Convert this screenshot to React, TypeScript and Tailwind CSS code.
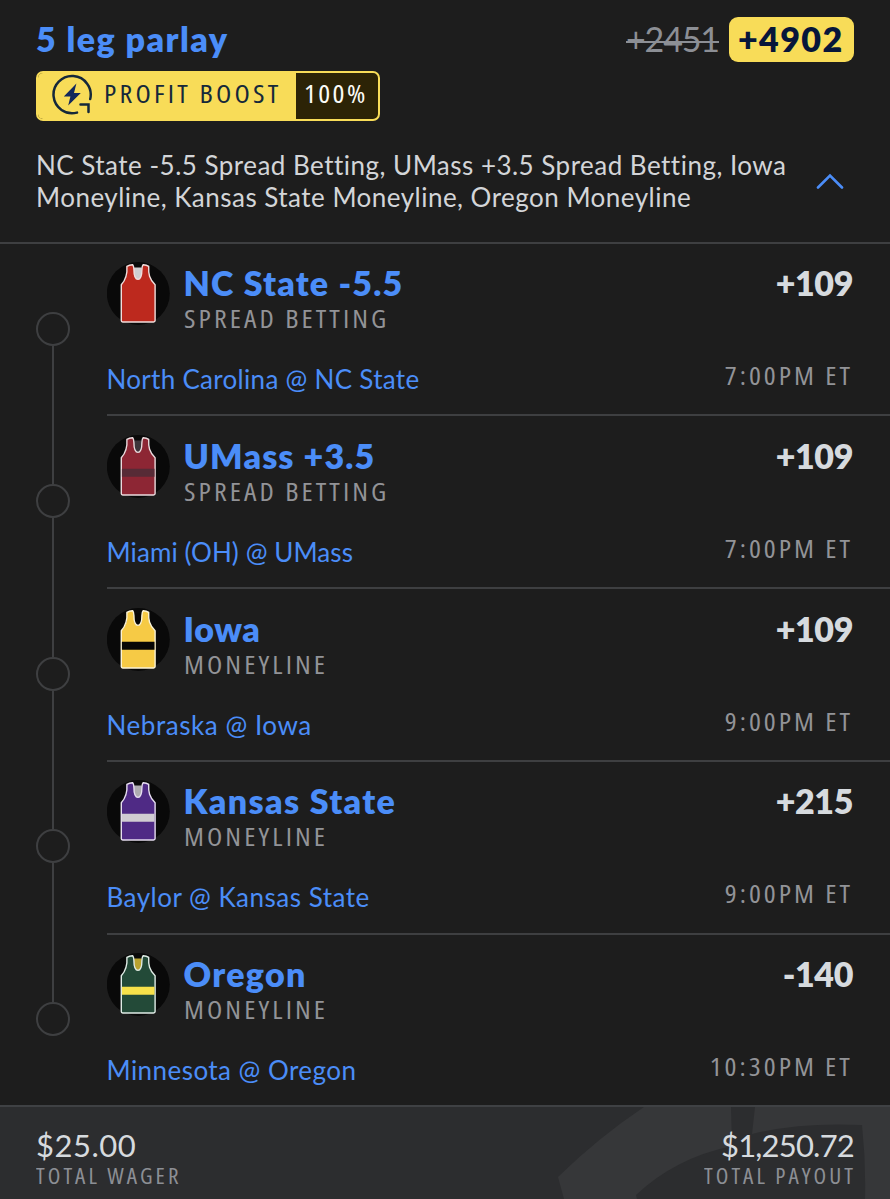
import type { ReactNode } from "react";

type Leg = {
  pick: string;
  pickClass: string;
  market: string;
  game: string;
  gameClass: string;
  odds: string;
  time: string;
  jersey: { body: string; stripe?: string; neck: string; trim: string };
};

const LEGS: Leg[] = [
  {
    pick: "NC State -5.5",
    pickClass: "tracking-[1.2px]",
    market: "SPREAD BETTING",
    game: "North Carolina @ NC State",
    gameClass: "tracking-[0.3px]",
    odds: "+109",
    time: "7:00PM ET",
    jersey: { body: "#bd291e", neck: "#cfcfd1", trim: "#f1dedd" },
  },
  {
    pick: "UMass +3.5",
    pickClass: "tracking-[1.1px]",
    market: "SPREAD BETTING",
    game: "Miami (OH) @ UMass",
    gameClass: "tracking-[0.1px]",
    odds: "+109",
    time: "7:00PM ET",
    jersey: { body: "#8d2634", stripe: "#572b36", neck: "#3c353a", trim: "#eadadd" },
  },
  {
    pick: "Iowa",
    pickClass: "tracking-[0.6px]",
    market: "MONEYLINE",
    game: "Nebraska @ Iowa",
    gameClass: "tracking-[0.55px]",
    odds: "+109",
    time: "9:00PM ET",
    jersey: { body: "#f6ca45", stripe: "#060606", neck: "#060606", trim: "#fbf3d6" },
  },
  {
    pick: "Kansas State",
    pickClass: "tracking-[1.35px]",
    market: "MONEYLINE",
    game: "Baylor @ Kansas State",
    gameClass: "tracking-[0.5px]",
    odds: "+215",
    time: "9:00PM ET",
    jersey: { body: "#4f2a85", stripe: "#d0ccd2", neck: "#aeacb0", trim: "#e6ddf0" },
  },
  {
    pick: "Oregon",
    pickClass: "tracking-[1.3px]",
    market: "MONEYLINE",
    game: "Minnesota @ Oregon",
    gameClass: "tracking-[0.45px]",
    odds: "-140",
    time: "10:30PM ET",
    jersey: { body: "#234a38", stripe: "#f7e14a", neck: "#b9a32f", trim: "#e0ece6" },
  },
];

// Narrow, widely tracked caps used for labels and times
function Caps({ className, children }: { className: string; children: ReactNode }) {
  return (
    <span
      className={`block scale-x-[1.078] whitespace-nowrap font-['Open_Sans',sans-serif] [font-stretch:75%] ${className}`}
    >
      {children}
    </span>
  );
}

function Jersey({ body, stripe, neck, trim }: Leg["jersey"]) {
  return (
    <svg className="block size-[63px] shrink-0" viewBox="0 0 63 63">
      <circle cx="31.3" cy="31.5" r="31.5" fill="#090909" />
      <g transform="translate(-.7 0)">
        <path d="M27.5 5.5h8v8l-2 4.5h-4l-2-4.5z" fill={neck} />
        <path
          d="M20.6 4.4Q23.2 2.6 26.4 2.7Q27.6 4 27.6 7.5C27.6 14 28.8 17.4 31.7 17.4S35.6 14 35.6 7.5Q35.6 4 36.8 2.7Q40 2.6 42.4 4.4C42 12 43 17 48.8 22.8V58.6Q48.8 59.9 47.2 60H16.4Q15 59.9 15 58.6V22.8C20.2 17 21.2 12 20.6 4.4Z"
          fill={body}
          stroke={trim}
          strokeWidth="1.4"
          strokeLinejoin="round"
        />
        {stripe ? <path d="M15.6 33.8h32.6v8H15.6z" fill={stripe} /> : null}
      </g>
    </svg>
  );
}

function BoostIcon() {
  return (
    <svg className="mt-px block h-[42px] w-[42px]" viewBox="0 0 42 42" fill="none">
      <path
        d="M39.2 25A18.6 18.6 0 1 0 26 38.6M29.5 30.5h8v7.6"
        stroke="#15283a"
        strokeWidth="2.5"
        strokeLinecap="round"
      />
      <path d="M25.4 9.6L12.8 22.4h6.6l-2.2 9.2 12.6-12.6H23z" fill="#13285c" />
    </svg>
  );
}

function LegRow({ leg, index }: { leg: Leg; index: number }) {
  const first = index === 0;
  const last = index === LEGS.length - 1;
  return (
    <div className="flex h-[172.8px] pl-9">
      <div className="flex w-[70.5px] shrink-0 flex-col">
        <div className={`ml-4 w-0.5 ${first ? "h-[68.5px]" : "h-[67.5px] bg-[#3e3f41]"}`} />
        <div className="size-[34px] shrink-0 rounded-full border-2 border-[#3e3f41]" />
        <div className={`ml-4 w-0.5 flex-1 ${last ? "" : "bg-[#3e3f41]"}`} />
      </div>
      <div className={`flex flex-1 flex-col pr-[37px] ${last ? "" : "border-b-2 border-[#3e3f41]"}`}>
        <div className="flex items-start pt-[18.5px]">
          <Jersey {...leg.jersey} />
          <div className="ml-3.5 flex-1 pt-0.5">
            <h2 className={`whitespace-nowrap text-[34px] leading-[38px] font-extrabold text-[#4b8df8] ${leg.pickClass}`}>
              {leg.pick}
            </h2>
            <Caps className="-mt-px origin-left text-[26px] leading-[34px] tracking-[2.85px] text-[#929397]">
              {leg.market}
            </Caps>
          </div>
          <span className="pt-0.5 text-[34px] leading-[38px] font-extrabold tracking-[-0.4px] text-[#d6dade]">
            {leg.odds}
          </span>
        </div>
        <div className="mt-[23px] flex items-start justify-between">
          <span className={`whitespace-nowrap pt-[5px] text-[26px] leading-8 text-[#4b8df8] ${leg.gameClass}`}>
            {leg.game}
          </span>
          <Caps className="origin-right text-[26px] leading-[34px] tracking-[2.8px] text-[#929397]">{leg.time}</Caps>
        </div>
      </div>
    </div>
  );
}

function Watermark() {
  return (
    <svg className="absolute inset-y-0 right-0 h-[92px] w-[340px]" viewBox="0 0 340 92" fill="#363739">
      <path d="M94 0Q49 30 8 70L14 92H87L86 88Q125 51 182 39L181 0Z" />
      <path d="M205 0L202 27Q250 15 312 18Q316 55 315 92H340V0Z" />
    </svg>
  );
}

export default function App() {
  return (
    <div className="h-[1199px] w-[890px] overflow-hidden bg-[#1d1d1d] font-['Lato',sans-serif]">
      <header className="h-[243.5px] border-b-2 border-[#3e3f41] pr-9 pl-9">
        <div className="flex items-start justify-between pt-[17px]">
          <h1 className="pt-0.5 text-[34px] leading-10 font-extrabold tracking-[1.45px] text-[#4b8df8]">
            5 leg parlay
          </h1>
          <div className="flex gap-[10px]">
            <span className="relative pt-0.5 text-[34px] leading-10 tracking-[-1.1px] text-[#8c8f95]">
              +2451
              <span className="absolute top-[24px] left-0 h-0.5 w-full bg-[#8c8f95]" />
            </span>
            <span className="h-[45px] w-[125px] rounded-[9px] bg-[#f8dc58] pt-0.5 pl-[9px] text-[34px] leading-10 font-extrabold tracking-[1.4px] text-[#07163a]">
              +4902
            </span>
          </div>
        </div>
        <div className="mt-[9px] flex h-[50px] w-[344px] overflow-hidden rounded-[7px] border-2 border-[#f8dc58] bg-[#2c2306]">
          <div className="flex w-[258px] bg-[#f8dc58] pl-[13px]">
            <BoostIcon />
            <Caps className="ml-[11px] origin-left text-[26px] leading-10 tracking-[3px] text-[#15283a]">
              PROFIT BOOST
            </Caps>
          </div>
          <Caps className="ml-2 origin-left text-[26px] leading-10 tracking-[2.2px] text-[#fbfbf6]">100%</Caps>
        </div>
        <div className="mt-[27.5px] flex items-center justify-between">
          <p className="text-[26px] leading-[32.5px] tracking-[0.48px] whitespace-nowrap text-[#d3d5d8]">
            NC State -5.5 Spread Betting, UMass +3.5 Spread Betting, Iowa
            <br />
            Moneyline, Kansas State Moneyline, Oregon Moneyline
          </p>
          <svg className="mr-2.5 h-4 w-7 shrink-0" viewBox="0 0 28 16" fill="none">
            <path d="M2 14.5L14 2.5l12 12" stroke="#4b8df8" strokeWidth="2.6" strokeLinecap="round" />
          </svg>
        </div>
      </header>
      <main>
        {LEGS.map((leg, i) => (
          <LegRow key={leg.pick} leg={leg} index={i} />
        ))}
      </main>
      <footer className="relative -mt-[2px] h-[94px] border-t-2 border-[#3f4144] bg-[#2c2d2f]">
        <Watermark />
        <div className="relative flex justify-between px-9 pt-[18px]">
          <div>
            <div className="text-[31px] leading-10 tracking-[0.5px] text-[#d6dade]">$25.00</div>
            <Caps className="-mt-px origin-left text-[21.5px] leading-6 tracking-[2.8px] text-[#8c8f95]">
              TOTAL WAGER
            </Caps>
          </div>
          <div className="text-right">
            <div className="text-[31px] leading-10 tracking-[-0.8px] text-[#d6dade]">$1,250.72</div>
            <Caps className="-mt-px -mr-0.5 origin-right text-[21.5px] leading-6 tracking-[2.8px] text-[#8c8f95]">
              TOTAL PAYOUT
            </Caps>
          </div>
        </div>
      </footer>
    </div>
  );
}
